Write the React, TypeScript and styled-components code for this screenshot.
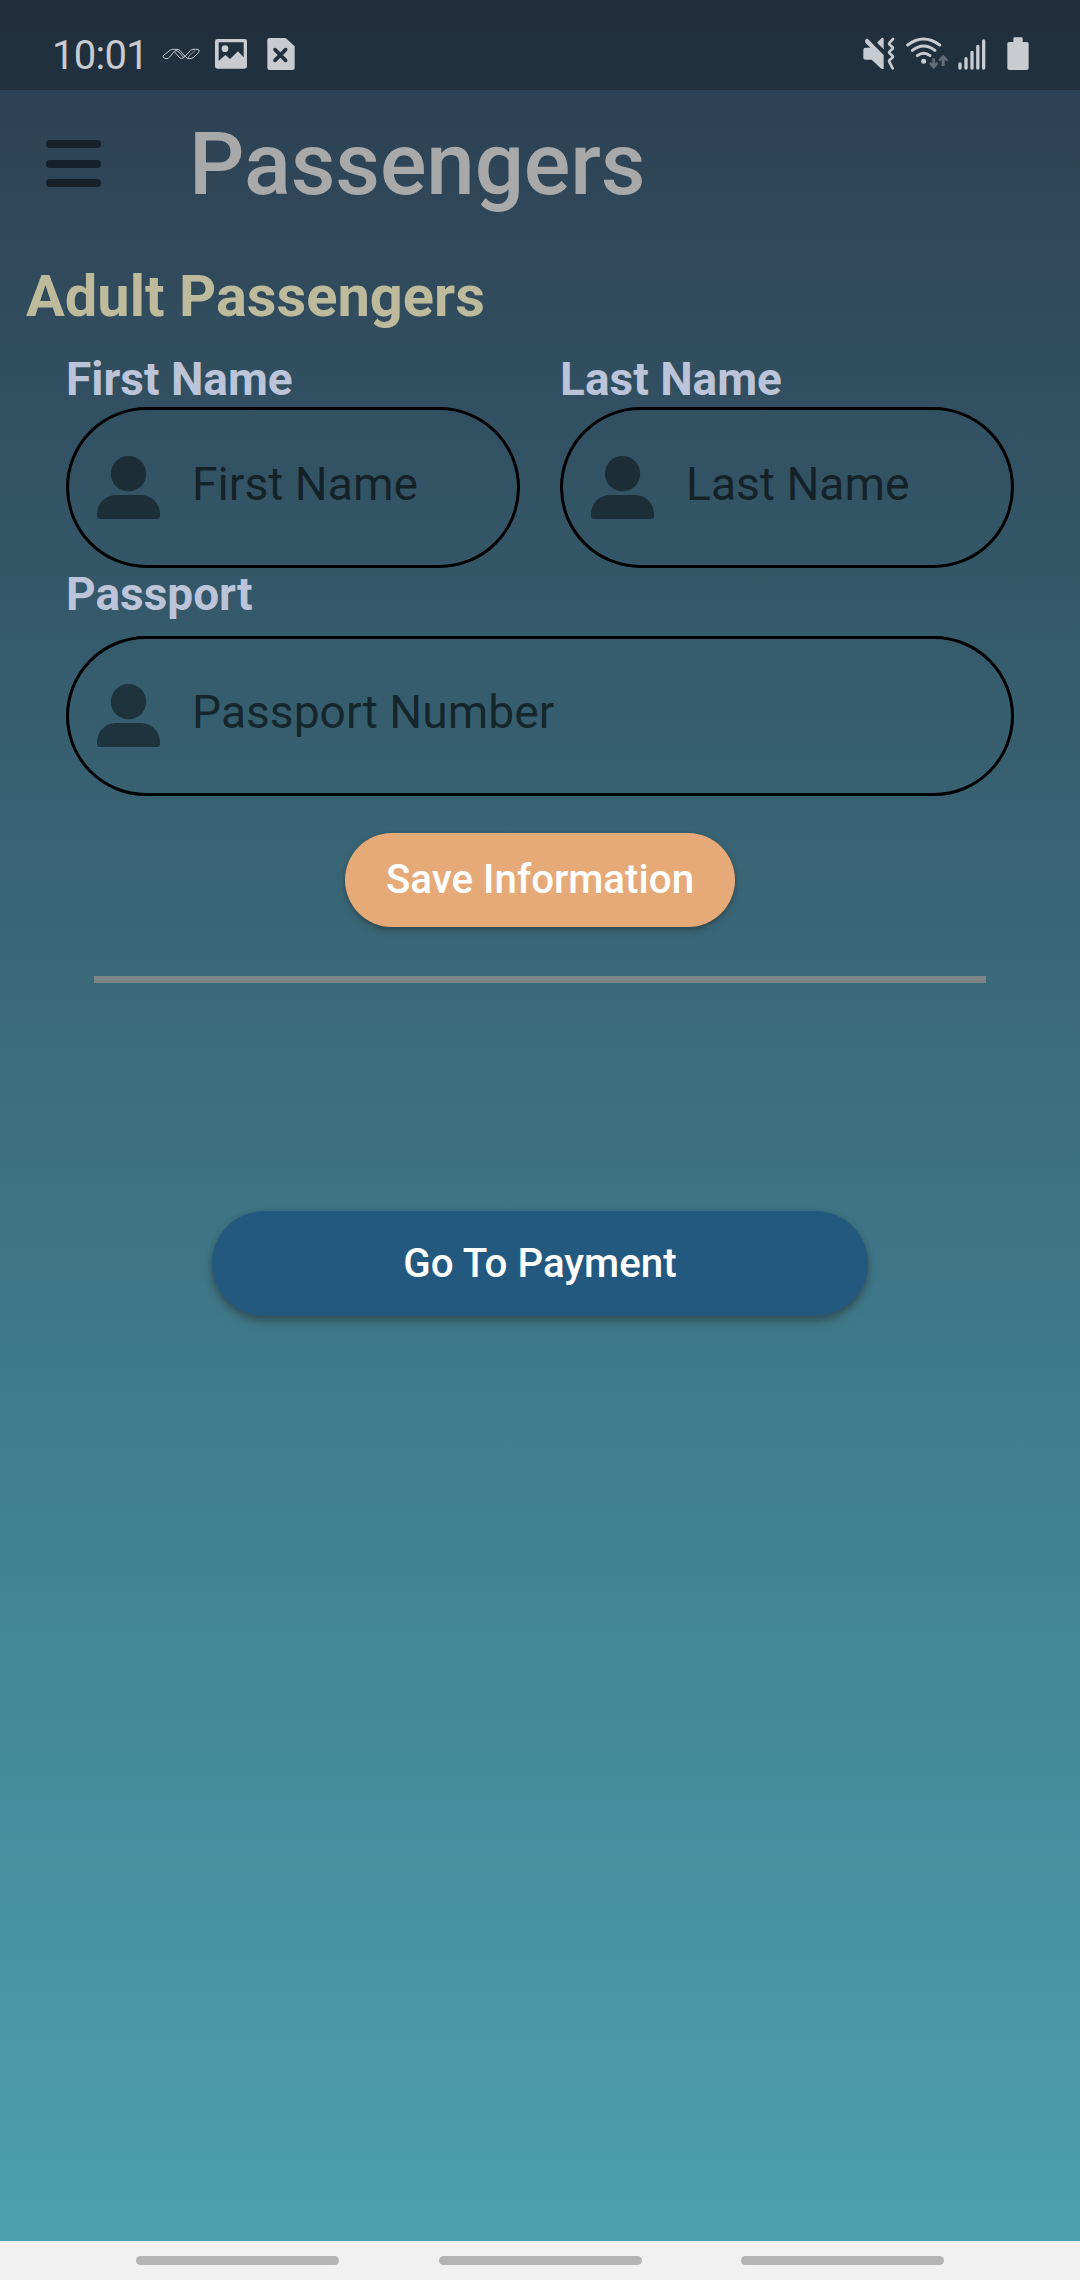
import React from "react";
import styled, { createGlobalStyle } from "styled-components";

const GlobalStyle = createGlobalStyle`
  * { box-sizing: border-box; }
  html, body { margin: 0; padding: 0; }
  body { font-family: Roboto, "Noto Sans", sans-serif; }
`;

const Screen = styled.div`
  width: 1080px;
  height: 2280px;
  display: flex;
  flex-direction: column;
  overflow: hidden;
`;

const Page = styled.div`
  flex: 1;
  display: flex;
  flex-direction: column;
  background: linear-gradient(to bottom, #2c3e50, #4ca1af);
`;

const StatusBar = styled.div`
  flex: none;
  height: 90px;
  padding: 20px 51px 0 52px;
  display: flex;
  justify-content: space-between;
  background: rgba(0, 0, 0, 0.25);
  color: #c8cbcf;
`;

const StatusGroup = styled.div`
  display: flex;
  align-items: center;
  height: 70px;
`;

const Clock = styled.span`
  width: 110px;
  padding-top: 2px;
  font-size: 40px;
  line-height: 70px;
  letter-spacing: -0.7px;
`;

const Glyph = styled.svg<{ $w: number; $gap?: number }>`
  display: block;
  flex: none;
  width: ${(p) => p.$w}px;
  height: 70px;
  margin-left: ${(p) => p.$gap ?? 0}px;
  fill: currentColor;
`;

const Header = styled.header`
  flex: none;
  height: 148px;
  padding-left: 46px;
  display: flex;
  align-items: center;
`;

const MenuButton = styled.button`
  width: 55px;
  height: 47px;
  margin-bottom: 1px;
  padding: 0;
  border: 0;
  background: none;
  display: flex;
  flex-direction: column;
  justify-content: space-between;
`;

const MenuBar = styled.span`
  width: 55px;
  height: 8px;
  border-radius: 4px;
  background: #15202a;
`;

const Title = styled.h1`
  margin: 0 0 0 88px;
  font-size: 87px;
  font-weight: 500;
  line-height: 148px;
  letter-spacing: -0.15px;
  color: #a9a9a9;
`;

const SectionTitle = styled.h2`
  margin: 24px 0 21px 26px;
  font-size: 57.8px;
  font-weight: 700;
  line-height: 68px;
  color: #bdbb9b;
`;

const Form = styled.form`
  padding: 0 66px;
  display: flex;
  flex-direction: column;
`;

const NameRow = styled.div`
  display: grid;
  grid-template-columns: repeat(2, minmax(0, 1fr));
  gap: 40px;
`;

const Field = styled.label`
  display: flex;
  flex-direction: column;
`;

const Label = styled.span<{ $height: number; $gap?: number }>`
  font-size: 46px;
  font-weight: 700;
  line-height: ${(p) => p.$height}px;
  margin-bottom: ${(p) => p.$gap ?? 0}px;
  color: #bcc4d9;
`;

const InputShell = styled.span`
  height: 160.5px;
  border: 3px solid #000;
  border-radius: 80.5px;
  padding: 0 24px 0 28px;
  display: flex;
  align-items: center;
`;

const PersonIcon = styled.svg`
  flex: none;
  width: 63px;
  height: 63px;
  fill: rgba(0, 0, 0, 0.45);
`;

const Input = styled.input`
  flex: 1;
  min-width: 0;
  height: 80px;
  margin: 0 0 7px 32px;
  padding: 0;
  border: 0;
  outline: 0;
  background: none;
  font: 400 46.2px/80px Roboto, "Noto Sans", sans-serif;
  color: #000;
  &::placeholder {
    color: rgba(0, 0, 0, 0.6);
    opacity: 1;
  }
`;

const PillButton = styled.button<{ $w: number; $h: number; $bg: string; $top: number; $raised?: boolean }>`
  flex: none;
  align-self: center;
  width: ${(p) => p.$w}px;
  height: ${(p) => p.$h}px;
  margin: ${(p) => p.$top}px 0 0;
  padding: 0;
  border: 0;
  border-radius: ${(p) => p.$h / 2}px;
  background: ${(p) => p.$bg};
  box-shadow: ${(p) =>
    p.$raised
      ? "0 6px 9px rgba(40, 40, 40, 0.4), 0 1px 5px rgba(40, 40, 40, 0.2)"
      : "0 4px 6px rgba(40, 40, 40, 0.35), 0 1px 3px rgba(40, 40, 40, 0.25)"};
  font: 500 40.3px/${(p) => p.$h - 2}px Roboto, "Noto Sans", sans-serif;
  color: #fff;
`;

const Divider = styled.hr`
  flex: none;
  width: 892px;
  height: 7px;
  margin: 49px auto 0;
  border: 0;
  background: #7f8489;
`;

const NavBar = styled.nav`
  flex: none;
  height: 39px;
  padding: 15px 0 0 136px;
  display: flex;
  gap: 99.5px;
  background: #f1f1f1;
`;

const NavPill = styled.span`
  flex: none;
  width: 203px;
  height: 9px;
  border-radius: 5px;
  background: #b4b4b4;
`;

const Person = () => (
  <PersonIcon viewBox="0 0 63 63">
    <circle cx="31.5" cy="17.7" r="17.7" />
    <path d="M19 39H44C54.500 39 63 47.500 63 58V60Q63 63 60 63H3Q0 63 0 60V58C0 47.500 8.500 39 19 39Z" />
  </PersonIcon>
);

const TextField = ({ label, placeholder, height, gap }: { label: string; placeholder: string; height: number; gap?: number }) => (
  <Field>
    <Label $height={height} $gap={gap}>{label}</Label>
    <InputShell>
      <Person />
      <Input placeholder={placeholder} />
    </InputShell>
  </Field>
);

/* Status glyphs are drawn on a grid of three units to the pixel. */
const StatusIcons = () => (
  <StatusBar>
    <StatusGroup>
      <Clock>10:01</Clock>
      <Glyph $w={38} viewBox="485 60 114 210">
        <g fill="none" stroke="currentColor" strokeWidth="3" strokeLinejoin="round">
          <path d="M488 170Q487 168 491 165L510 150Q514 148 519 148H530Q535 148 539 152L556 171Q560 176 566 176Q576 176 580 172L594 158Q598 153 595 149Q591 147 585 148H578Q574 148 570 152L552 171Q547 176 543 175Q539 175 536 171L523 156" />
          <path d="M488 170Q491 177 500 176Q505 175 508 171L522 154Q527 149 532 153L551 173" />
          <path d="M566 176Q562 172 566 168L585 151" strokeWidth="2" />
        </g>
      </Glyph>
      <Glyph $w={32} $gap={15} viewBox="645 60 96 210">
        <path
          fillRule="evenodd"
          d="M652 117H734Q741 117 741 124V199Q741 206 734 206H652Q645 206 645 199V124Q645 117 652 117ZM656 127V183L676 165L690 177L714 154L731 172V127Z"
        />
        <circle cx="675" cy="146" r="10" />
      </Glyph>
      <Glyph $w={28} $gap={20} viewBox="801 60 84 210">
        <path d="M809 114H857L884 139V203Q884 210 877 210H809Q802 210 802 203V121Q802 114 809 114Z" />
        <path d="M825 149L857 181M857 149L825 181" stroke="#22303d" strokeWidth="11" strokeLinecap="round" />
      </Glyph>
    </StatusGroup>
    <StatusGroup>
      <Glyph $w={32} viewBox="125 60 96 210">
        <path d="M132 143H147L132 128Q129 122 134 117Q138 115 142 119L187 165V206Q183 209 178 205L151 179H132Q126 179 126 173V149Q126 143 132 143Z" />
        <path d="M167 128L181 114Q187 112 187 118V148Z" />
        <path
          d="M215 117L205 128Q202 131 205 134L213 141Q216 144 213 147L205 154Q202 157 205 160L213 167Q216 170 213 173L205 180Q202 183 205 187L214 205"
          fill="none"
          stroke="currentColor"
          strokeWidth="8"
          strokeLinecap="round"
        />
      </Glyph>
      <Glyph $w={42} $gap={11} viewBox="257 60 126 210">
        <g fill="none" stroke="currentColor" strokeWidth="9" strokeLinecap="round">
          <path d="M262 135Q310 99 358 135" />
          <path d="M276 151Q310 125 344 151" />
          <path d="M291 167Q310 153 329 167" />
        </g>
        <circle cx="310" cy="184" r="7.500" />
        <path opacity="0.4" d="M336 175H344V190L349 186Q355 188 352 194L340 207L328 194Q325 188 331 186L336 190Z" />
        <path opacity="0.4" d="M364 198H373V179L378 184Q384 183 381 177L369 164L356 177Q353 183 359 184L364 179Z" />
      </Glyph>
      <Glyph $w={28} $gap={10} viewBox="416 60 84 210">
        <g stroke="currentColor" strokeWidth="10" strokeLinecap="round">
          <path d="M422 192V204M440 176V204M458 157V204M475.500 139V204M493 123V204" />
        </g>
      </Glyph>
      <Glyph $w={22} $gap={21} viewBox="563 60 66 210">
        <path d="M585 112H606Q610 112 610 116V126H623Q628 126 628 131V204Q628 210 622 210H570Q564 210 564 204V131Q564 126 569 126H582V116Q582 112 585 112Z" />
      </Glyph>
    </StatusGroup>
  </StatusBar>
);

export default function App() {
  return (
    <Screen>
      <GlobalStyle />
      <Page>
        <StatusIcons />
        <Header>
          <MenuButton aria-label="Menu">
            <MenuBar />
            <MenuBar />
            <MenuBar />
          </MenuButton>
          <Title>Passengers</Title>
        </Header>
        <SectionTitle>Adult Passengers</SectionTitle>
        <Form onSubmit={(e) => e.preventDefault()}>
          <NameRow>
            <TextField label="First Name" placeholder="First Name" height={56} />
            <TextField label="Last Name" placeholder="Last Name" height={56} />
          </NameRow>
          <TextField label="Passport" placeholder="Passport Number" height={53} gap={15} />
          <PillButton $w={390} $h={94} $top={36.5} $bg="#e6aa79">Save Information</PillButton>
        </Form>
        <Divider />
        <PillButton $w={656} $h={105} $top={228} $bg="#23587f" $raised>Go To Payment</PillButton>
      </Page>
      <NavBar>
        <NavPill />
        <NavPill />
        <NavPill />
      </NavBar>
    </Screen>
  );
}
